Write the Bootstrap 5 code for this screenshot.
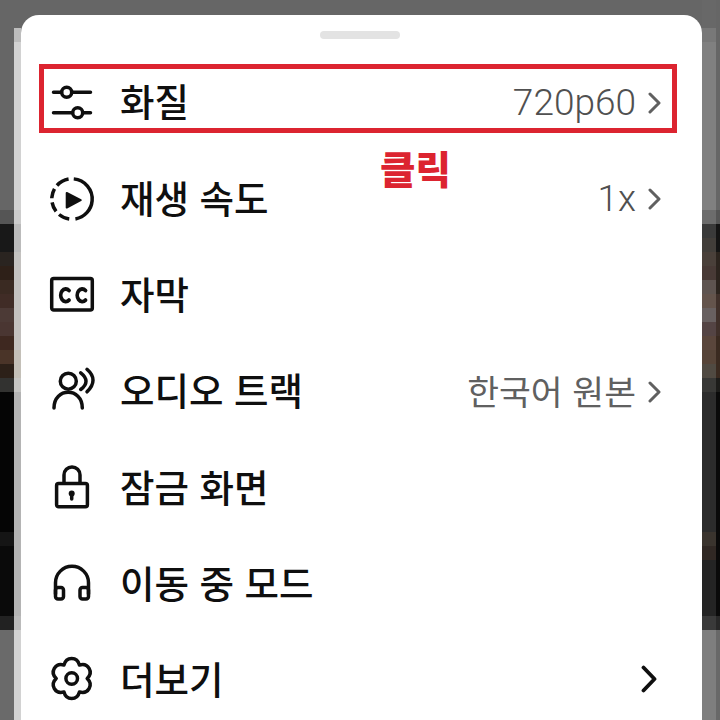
<!DOCTYPE html>
<html lang="ko">
<head>
<meta charset="utf-8">
<title>설정</title>
<link href="https://cdn.jsdelivr.net/npm/bootstrap@5.3.0/dist/css/bootstrap.min.css" rel="stylesheet">
<style>
html,body{height:720px;width:720px;overflow:hidden;background:#666}
.stage{width:720px;height:720px;overflow:hidden}
.bcol{height:720px}
.bc1{width:14px;background:linear-gradient(#666 0 210px,#555 210px 224px,#181818 224px 252px,#2a2420 252px 266px,#2e2018 266px 280px,#3a2a22 280px 294px,#402c26 294px 308px,#4c3a36 308px 322px,#4a3632 322px 336px,#3e2820 336px 350px,#4a3428 350px 364px,#2c2018 364px 378px,#323230 378px 392px,#050505 392px 532px,#151515 532px 546px,#0a0a0a 546px 616px,#222 616px 630px,#6a6a6a 630px)}
.bc2{width:7px;background:linear-gradient(#666 0 28px,#bdbdbd 28px 42px,#d2d2d2 42px 210px,#ccc 210px 224px,#bbb 224px 252px,#c4c2c0 252px 350px,#c4c0b8 350px 378px,#c6c6c4 378px 392px,#b4b4b4 392px 616px,#bbb 616px 630px,#d2d2d2 630px)}
.bc3{width:14px;background:linear-gradient(#686868 0 28px,#787878 28px 42px,#808080 42px 210px,#6c6c6c 210px 224px,#3a3a3a 224px 238px,#423e3a 238px 252px,#4a403a 252px 266px,#483a36 266px 280px,#5e5450 280px 294px,#64544c 294px 308px,#686060 308px 322px,#544444 322px 336px,#5a463c 336px 350px,#564438 350px 364px,#504a42 364px 378px,#383836 378px 392px,#2c2c2c 392px 532px,#3a342e 532px 546px,#302824 546px 560px,#242424 560px 616px,#3a3a3a 616px 630px,#7e7e7e 630px)}
.bc4{width:4px;background:linear-gradient(#666 0 210px,#555 210px 224px,#141414 224px 252px,#2c241e 252px 294px,#40302a 294px 336px,#3a2a20 336px 378px,#1c1c1a 378px 392px,#0a0a0a 392px 616px,#282828 616px 630px,#686868 630px)}
.bgap{width:681px}
.sheet{left:21px;top:15px;width:681px;height:720px;background:#fff;border-radius:18px 18px 0 0;font-family:"Noto Sans CJK KR","Noto Sans",sans-serif}
.grab{width:80px;height:8px;border-radius:4px;background:#e3e3e3;margin:16px 0 0 299px}
.mlist{margin-top:13.3px}
.mrow{height:96.33px;padding:0 40px 0 28px;color:#0f0f0f}
.micon{width:44px;height:44px;flex:none;margin-right:27px}
.micon svg{display:block;width:44px;height:44px;overflow:visible;fill:none;stroke:#0f0f0f;stroke-width:3.5;stroke-linecap:round;stroke-linejoin:round}
.mlabel{font-size:37.5px;line-height:44px;font-weight:500}
.mval{font-size:37px;line-height:44px;margin-top:5px;color:#505050;font-family:Roboto,"Noto Sans CJK KR",sans-serif;font-weight:300}
.mval.kor{font-size:34.6px;margin-top:2px;font-weight:400;color:#606060;font-family:"Noto Sans CJK KR",sans-serif}
.chev{width:14px;height:22px;flex:none;margin-left:12px;margin-top:5px;fill:none;stroke:#606060;stroke-width:3;stroke-linecap:round;stroke-linejoin:round}
.chev.dark{stroke:#0f0f0f;stroke-width:3.8;height:30px;width:18px;margin:1px 5px 0 0}
.callout{left:18px;top:49px;width:638px;height:69px;border:5px solid #dc2430}
.clicknote{left:359px;top:128px;color:#dc2430;font-size:38.5px;line-height:48px;font-weight:900;font-family:"Noto Sans CJK KR",sans-serif}
</style>
</head>
<body>
<div class="stage d-flex position-relative">
  <div class="bcol bc1"></div><div class="bcol bc2"></div><div class="bgap"></div><div class="bcol bc3"></div><div class="bcol bc4"></div>
  <div class="sheet position-absolute">
    <div class="grab"></div>
    <div class="mlist">
      <div class="mrow d-flex align-items-center">
        <span class="micon"><svg viewBox="0 0 44 44"><path d="M4.5 14.2h8M23 14.2h18.5M4.5 34.8h19M34 34.8h7.5"/><circle cx="17.7" cy="14.2" r="5"/><circle cx="28.7" cy="34.8" r="5"/></svg></span>
        <span class="mlabel flex-grow-1">화질</span>
        <span class="mval">720p60</span>
        <svg class="chev" viewBox="0 0 14 22"><path d="M2 2l9 9-9 9"/></svg>
      </div>
      <div class="mrow d-flex align-items-center">
        <span class="micon"><svg viewBox="0 0 44 44"><circle cx="23" cy="24" r="20.2" pathLength="360" stroke-dasharray="165 18 32 12 28 12 28 12 38 15" stroke-linecap="butt" transform="rotate(-85 23 24)"/><path d="M17.7 18l14 7.2-14 7.3z" fill="#0f0f0f" stroke-width="2"/></svg></span>
        <span class="mlabel flex-grow-1">재생 속도</span>
        <span class="mval">1x</span>
        <svg class="chev" viewBox="0 0 14 22"><path d="M2 2l9 9-9 9"/></svg>
      </div>
      <div class="mrow d-flex align-items-center">
        <span class="micon"><svg viewBox="0 0 44 44"><rect x="2.7" y="7.5" width="40.6" height="31.6" rx="2"/><path d="M20 19.5a5 6.3 0 1 0 0 9.6M36.5 19.5a5 6.3 0 1 0 0 9.6" stroke-width="3.8"/></svg></span>
        <span class="mlabel flex-grow-1">자막</span>
      </div>
      <div class="mrow d-flex align-items-center">
        <span class="micon"><svg viewBox="0 0 44 44"><circle cx="19.3" cy="14.2" r="8"/><path d="M5 41c0-21 28.3-21 28.3 0M31.7 5.8Q42.3 14.2 31.7 22.5M38 2.3Q50 12.8 38 24.8"/></svg></span>
        <span class="mlabel flex-grow-1">오디오 트랙</span>
        <span class="mval kor">한국어 원본</span>
        <svg class="chev" viewBox="0 0 14 22"><path d="M2 2l9 9-9 9"/></svg>
      </div>
      <div class="mrow d-flex align-items-center">
        <span class="micon"><svg viewBox="0 0 44 44"><rect x="7.6" y="19.5" width="30.8" height="23.3" rx="2"/><path d="M15 19v-8a8 8 0 0 1 16 0v8"/><circle cx="22.7" cy="29.5" r="3" fill="#0f0f0f" stroke="none"/><path d="M22.7 30v5"/></svg></span>
        <span class="mlabel flex-grow-1">잠금 화면</span>
      </div>
      <div class="mrow d-flex align-items-center">
        <span class="micon"><svg viewBox="0 0 44 44"><path d="M6.5 34V22.8a16.5 16.5 0 0 1 33 0V34"/><rect x="6.5" y="27.5" width="8" height="11.5" rx="2.5"/><rect x="31" y="27.5" width="8.5" height="11.5" rx="2.5"/></svg></span>
        <span class="mlabel flex-grow-1">이동 중 모드</span>
      </div>
      <div class="mrow d-flex align-items-center">
        <span class="micon"><svg viewBox="0 0 44 44"><circle cx="22.7" cy="22.5" r="5.8"/><path d="M14.95 9.08C17.14 .2 28.26 .2 30.45 9.08C39.2 6.5 44.8 16.2 38.2 22.5C44.8 28.8 39.2 38.5 30.45 35.92C28.26 44.8 17.14 44.8 14.95 35.92C6.2 38.5 .6 28.8 7.2 22.5C.6 16.2 6.2 6.5 14.95 9.08z"/></svg></span>
        <span class="mlabel flex-grow-1">더보기</span>
        <svg class="chev dark" viewBox="0 0 18 30"><path d="M4.5 3.5l11 11.5-11 11.5"/></svg>
      </div>
    </div>
    <div class="callout position-absolute"></div>
    <div class="clicknote position-absolute">클릭</div>
  </div>
</div>
<script src="https://cdn.jsdelivr.net/npm/bootstrap@5.3.0/dist/js/bootstrap.bundle.min.js"></script>
</body>
</html>
